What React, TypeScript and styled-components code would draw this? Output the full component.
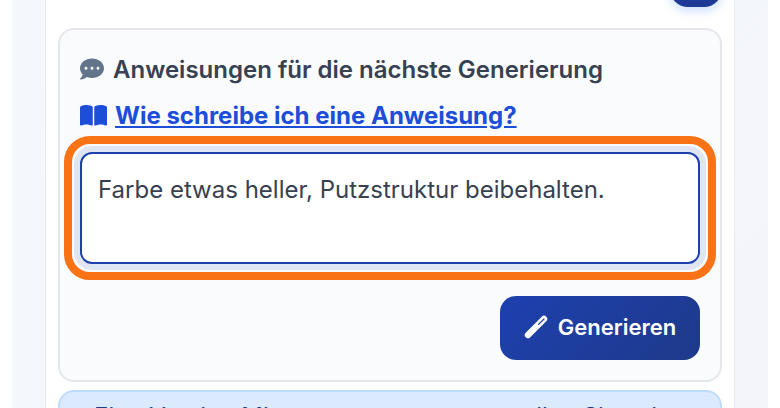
import React from 'react';
import styled, { createGlobalStyle } from 'styled-components';
import { FaCommentDots } from 'react-icons/fa';
import { FaBookOpen } from 'react-icons/fa6';

const GlobalStyle = createGlobalStyle`
    html,
    body {
        margin: 0;
        height: 408px;
        overflow: hidden;
        background: #ffffff;
        font-family: 'Inter', 'Liberation Sans', sans-serif;
    }
    * {
        box-sizing: border-box;
    }
`;

const WandIcon: React.FC = () => (
    <svg width="24" height="24" viewBox="0 0 24 24">
        <path d="M4 20L20 4" stroke="#ffffff" strokeWidth="6.4" strokeLinecap="round" />
        <path d="M14.5 9.5L20 4" stroke="#1e40af" strokeWidth="1.1" strokeLinecap="round" />
    </svg>
);

export default function App() {
    return (
        <>
            <GlobalStyle />
            <Page>
                <Card>
                    <TopAction />
                    <Panel>
                        <Heading>
                            <FaCommentDots size={24} color="#64748b" />
                            <span>Anweisungen für die nächste Generierung</span>
                        </Heading>
                        <HelpRow>
                            <FaBookOpen size={27} color="#1d4ed8" />
                            <HelpLink href="#">Wie schreibe ich eine Anweisung?</HelpLink>
                        </HelpRow>
                        <Highlight>
                            <Prompt defaultValue="Farbe etwas heller, Putzstruktur beibehalten." />
                        </Highlight>
                        <Actions>
                            <GenerateButton type="button">
                                <WandIcon />
                                Generieren
                            </GenerateButton>
                        </Actions>
                    </Panel>
                    <Notice>
                        <span>Eine Version Mit</span>
                        <span>stellen Sie seit</span>
                    </Notice>
                </Card>
            </Page>
        </>
    );
}

const Page = styled.div`
    width: 756px;
    height: 408px;
    margin-left: 12px;
    padding: 0 33px;
    background: linear-gradient(135deg, #f4f8fc, #f3f5fb);
    overflow: hidden;
`;

const Card = styled.div`
    position: relative;
    height: 408px;
    padding: 28px 12px 0;
    background: #ffffff;
    border: solid #e5e9f0;
    border-width: 0 1px;
`;

const TopAction = styled.div`
    position: absolute;
    top: -45px;
    right: 12px;
    width: 52px;
    height: 52px;
    border-radius: 18px;
    background: #1e3a96;
    box-shadow: 0 4px 10px rgba(59, 130, 246, 0.25);
`;

const Panel = styled.section`
    height: 354px;
    padding: 22px 20px 20px;
    background: #fafbfd;
    border: 2px solid #e5e7eb;
    border-radius: 16px;
`;

const Heading = styled.h3`
    display: flex;
    align-items: center;
    gap: 9px;
    height: 34px;
    margin: 0;
    color: #374151;
    font-size: 24px;
    font-weight: 600;
`;

const HelpRow = styled.div`
    display: flex;
    align-items: center;
    gap: 8px;
    height: 34px;
    margin-top: 12px;
`;

const HelpLink = styled.a`
    color: #1d4ed8;
    font-size: 24px;
    font-weight: 700;
    text-decoration: underline;
`;

const Highlight = styled.div`
    margin: 4px -16px 0;
    padding: 8px;
    border: 8px solid #f97316;
    border-radius: 26px;
`;

const Prompt = styled.textarea`
    display: block;
    width: 100%;
    height: 112px;
    padding: 20px 16px;
    resize: none;
    outline: none;
    background: #ffffff;
    border: 2px solid #1e40af;
    border-radius: 12px;
    box-shadow: 0 0 0 6px #e0e5f4;
    color: #374151;
    font-family: inherit;
    font-size: 24px;
    line-height: 32px;
`;

const Actions = styled.div`
    display: flex;
    justify-content: flex-end;
    margin-top: 16px;
`;

const GenerateButton = styled.button`
    display: flex;
    align-items: center;
    justify-content: center;
    gap: 10px;
    width: 200px;
    height: 64px;
    padding: 0 0 3px;
    border: 0;
    border-radius: 16px;
    background: linear-gradient(135deg, #1e40af, #1e3a8a);
    color: #ffffff;
    font-family: inherit;
    font-size: 22px;
    font-weight: 600;
`;

const Notice = styled.div`
    display: flex;
    justify-content: space-between;
    height: 60px;
    margin-top: 8px;
    padding: 11px 55px 0 34px;
    background: #dbeafe;
    border: 2px solid #bfdbfe;
    border-radius: 16px;
    color: #1e3a8a;
    font-size: 24px;
    line-height: 28px;
    white-space: nowrap;
`;
